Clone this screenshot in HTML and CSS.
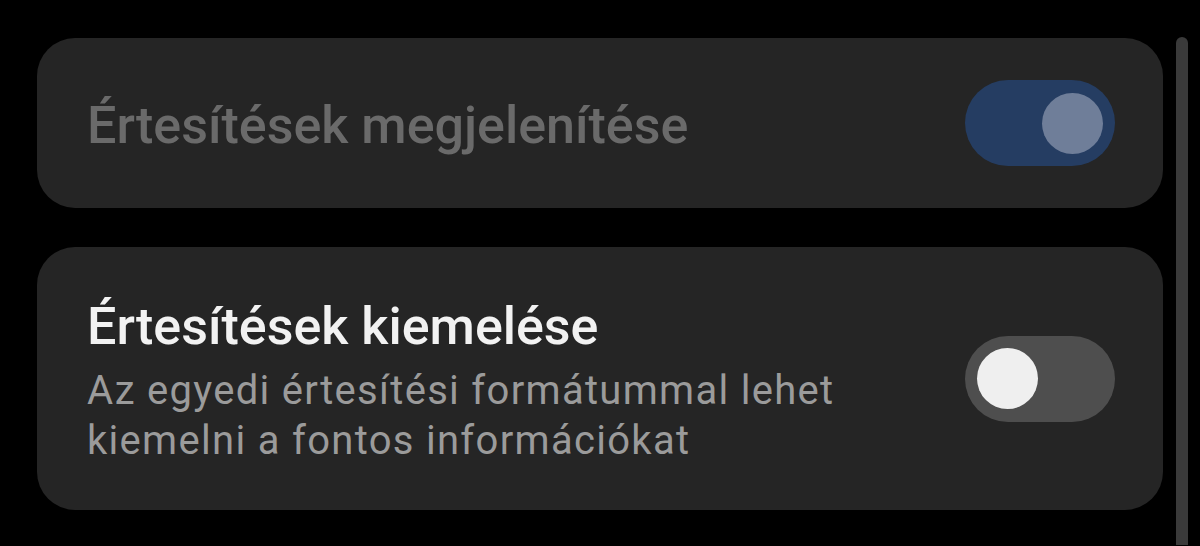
FILE: index.html
```html
<!DOCTYPE html>
<html lang="hu">
<head>
<meta charset="utf-8">
<link rel="stylesheet" href="styles.css">
</head>
<body>
<div class="screen">
  <div class="list">
    <div class="card card-single">
      <div class="text">
        <div class="title title-disabled">Értesítések megjelenítése</div>
      </div>
      <div class="switch switch-on"><div class="knob"></div></div>
    </div>
    <div class="card card-double">
      <div class="text">
        <div class="title">Értesítések kiemelése</div>
        <div class="summary">Az egyedi értesítési formátummal lehet<br>kiemelni a fontos információkat</div>
      </div>
      <div class="switch switch-off"><div class="knob"></div></div>
    </div>
  </div>
  <div class="scrollbar"></div>
</div>
</body>
</html>
```

FILE: styles.css
```css
html, body {
  margin: 0;
  padding: 0;
  background: #000;
  width: 1200px;
  height: 546px;
  overflow: hidden;
  font-family: Roboto, "Noto Sans", sans-serif;
}
.screen {
  display: flex;
  align-items: flex-start;
  height: 546px;
  box-sizing: border-box;
  padding: 38px 12px 0 37px;
  gap: 13px;
  overflow: hidden;
}
.list {
  flex: 1;
  display: flex;
  flex-direction: column;
  gap: 39px;
}
.card {
  background: #252525;
  border-radius: 38px;
  display: flex;
  align-items: center;
  justify-content: space-between;
  padding: 0 48px 0 50px;
}
.card-single {
  height: 170px;
}
.card-single .text {
  padding-top: 5px;
}
.card-double {
  height: 263px;
}
.card-double .text {
  padding-top: 6px;
}
.title {
  font-size: 52px;
  line-height: 60px;
  font-weight: 500;
  color: #f2f2f2;
  white-space: nowrap;
}
.title-disabled {
  color: #6a6a6a;
}
.summary {
  margin-top: 9px;
  font-size: 40px;
  line-height: 50px;
  letter-spacing: 1.3px;
  color: #9b9b9b;
  white-space: nowrap;
}
.switch {
  width: 150px;
  height: 86px;
  border-radius: 43px;
  display: flex;
  align-items: center;
  padding: 0 12px;
  box-sizing: border-box;
  flex-shrink: 0;
}
.switch-on {
  background: #253d62;
  justify-content: flex-end;
}
.switch-off {
  background: #4e4e4e;
  justify-content: flex-start;
}
.knob {
  width: 61px;
  height: 61px;
  border-radius: 50%;
}
.switch-on .knob {
  background: #6f7e99;
}
.switch-off .knob {
  background: #efefef;
}
.scrollbar {
  width: 12px;
  height: 508px;
  background: #3a3a3a;
  border-radius: 6px 6px 0 0;
  margin-top: -1px;
}
```
